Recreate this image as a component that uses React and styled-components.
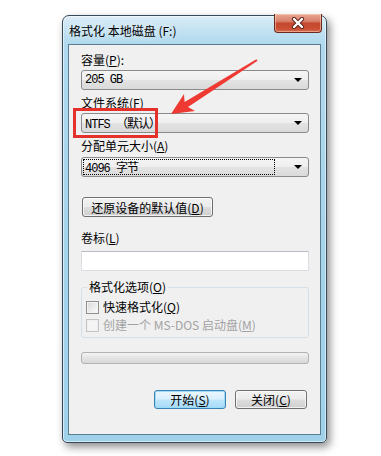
import styled, { createGlobalStyle } from 'styled-components';

const GlobalStyle = createGlobalStyle`
  body {
    margin: 0;
    background: #fff;
    font-family: "Noto Sans CJK SC", "Liberation Sans", sans-serif;
  }
`;

const Page = styled.div`
  position: relative;
  width: 381px;
  height: 456px;
  box-sizing: border-box;
  padding: 15px 0 0 62px;
  overflow: hidden;
  background: #fff;
`;

const Window = styled.div`
  width: 265px;
  height: 428px;
  box-sizing: border-box;
  display: flex;
  flex-direction: column;
  padding: 0 5px 7px 5px;
  border: 1px solid #36495a;
  border-radius: 7px 7px 5px 5px;
  background: linear-gradient(to bottom, #dcedf7 0px, #c3e2f2 14px, #b0d9ee 28px, #a4d3ea 60%, #9fd2ea 100%);
  box-shadow: inset 0 0 0 1px rgba(255, 255, 255, 0.55), 3px 4px 9px rgba(0, 0, 0, 0.45);
`;

const TitleBar = styled.div`
  height: 28px;
  display: flex;
  align-items: center;
  padding-left: 1px;
`;

const Title = styled.div`
  flex: 1;
  font-size: 12px;
  line-height: 16px;
  color: #000;
  padding-top: 1px;
  text-shadow: 0 0 6px rgba(255, 255, 255, 0.9);
`;

const CloseButton = styled.div`
  align-self: flex-start;
  margin: -2px -1px 0 0;
  width: 48px;
  height: 19px;
  box-sizing: border-box;
  display: flex;
  align-items: center;
  justify-content: center;
  border: 1px solid #6b2a1e;
  border-top: none;
  border-radius: 0 0 4px 4px;
  background: linear-gradient(to bottom, #e9a996 0%, #d9806b 40%, #c5472f 52%, #c94f34 80%, #d66a4c 100%);
  box-shadow: inset 0 0 0 1px rgba(255, 220, 200, 0.5);
`;

const Client = styled.div`
  flex: 1;
  display: flex;
  flex-direction: column;
  padding: 0 11px 0 12px;
  border: 1px solid #5c7c90;
  background: #f0f0f0;
  font-size: 12px;
  color: #000;
`;

const Label = styled.div`
  margin-top: ${p => p.$top || 5}px;
  line-height: 16px;
  height: 16px;
  white-space: nowrap;
`;

const Key = styled.span`
  text-decoration: underline;
`;

const Combo = styled.div`
  margin-top: ${p => p.$top || 2}px;
  height: 20px;
  box-sizing: border-box;
  display: flex;
  align-items: center;
  padding: 1px 0 1px 1px;
  border: 1px solid #8a8a8a;
  border-radius: 3px;
  background: linear-gradient(to bottom, #f5f5f5 0%, #efefef 48%, #e3e3e3 52%, #dadada 100%);
`;

const ComboValue = styled.div`
  flex: 1;
  height: 16px;
  box-sizing: border-box;
  margin-right: 19px;
  padding-left: 1px;
  display: flex;
  align-items: center;
  border: 1px dotted ${p => (p.$focus ? '#000' : 'transparent')};
  font-family: "Liberation Mono", "Noto Sans CJK SC", monospace;
  font-size: 12px;
  letter-spacing: -1px;
  white-space: nowrap;
`;

const ComboArrow = styled.div`
  width: 0;
  height: 0;
  margin-right: 6px;
  border-left: 4px solid transparent;
  border-right: 4px solid transparent;
  border-top: 4px solid #000;
`;

const Button = styled.div`
  margin-top: ${p => p.$top || 0}px;
  margin-left: ${p => p.$left || 0}px;
  width: ${p => p.$width}px;
  height: ${p => p.$height || 20}px;
  box-sizing: border-box;
  display: flex;
  align-items: center;
  justify-content: center;
  font-size: 12px;
  white-space: nowrap;
  border: 1px solid ${p => (p.$default ? '#3c7fb1' : '#707070')};
  border-radius: 3px;
  background: ${p =>
    p.$default
      ? 'linear-gradient(to bottom, #eaf6fd 0%, #d9f0fc 48%, #bee6fd 52%, #a7d9f5 100%)'
      : 'linear-gradient(to bottom, #f2f2f2 0%, #ebebeb 48%, #dddddd 52%, #cfcfcf 100%)'};
  box-shadow: inset 0 0 0 1px ${p => (p.$default ? 'rgba(150, 220, 250, 0.9)' : 'rgba(255, 255, 255, 0.7)')};
`;

const TextBox = styled.div`
  margin-top: 5px;
  height: 20px;
  box-sizing: border-box;
  border: 1px solid #dadde2;
  border-top-color: #b7bcc4;
  background: #fff;
`;

const Group = styled.fieldset`
  margin: 8px 0 0 0;
  padding: 0 0 4px 5px;
  border: 1px solid #d5dfe5;
  border-radius: 3px;
  min-width: 0;
`;

const Legend = styled.legend`
  padding: 0 2px;
  line-height: 16px;
  font-size: 12px;
`;

const CheckRow = styled.div`
  margin-top: ${p => p.$top}px;
  margin-left: -1px;
  height: 16px;
  display: flex;
  align-items: center;
  gap: 4px;
  line-height: 16px;
  white-space: nowrap;
  color: ${p => (p.$disabled ? '#a3a3a3' : '#000')};
`;

const CheckBox = styled.div`
  width: 13px;
  height: 13px;
  box-sizing: border-box;
  border: 1px solid ${p => (p.$disabled ? '#c4c4c4' : '#8e8f8f')};
  background: ${p =>
    p.$disabled ? '#f4f4f4' : 'linear-gradient(135deg, #d6d6d6 0%, #eeeeee 60%, #fbfbfb 100%)'};
  box-shadow: inset 0 0 0 1px ${p => (p.$disabled ? '#f0f0f0' : '#f4f4f4')};
`;

const Progress = styled.div`
  margin-top: 14px;
  height: 12px;
  box-sizing: border-box;
  border: 1px solid #b2b2b2;
  border-radius: 3px;
  background: linear-gradient(to bottom, #f3f3f3 0%, #e4e4e4 50%, #d8d8d8 100%);
`;

const ButtonRow = styled.div`
  margin-top: 26px;
  margin-right: 2px;
  display: flex;
  justify-content: flex-end;
  gap: 9px;
`;

const Annotation = styled.svg`
  position: absolute;
  left: 0;
  top: 0;
  pointer-events: none;
`;

function Close() {
  return (
    <CloseButton>
      <svg width="14" height="12" viewBox="0 0 14 12">
        <path d="M3 2 L11 10 M11 2 L3 10" stroke="#5a2217" strokeWidth="4.2" strokeLinecap="round" />
        <path d="M3 2 L11 10 M11 2 L3 10" stroke="#fff" strokeWidth="2.4" strokeLinecap="round" />
      </svg>
    </CloseButton>
  );
}

export default function App() {
  return (
    <Page>
      <GlobalStyle />
      <Window>
        <TitleBar>
          <Title>格式化 本地磁盘 (F:)</Title>
          <Close />
        </TitleBar>
        <Client>
          <Label $top={7}>容量(<Key>P</Key>):</Label>
          <Combo>
            <ComboValue>205 GB</ComboValue>
            <ComboArrow />
          </Combo>

          <Label>文件系统(<Key>F</Key>)</Label>
          <Combo>
            <ComboValue>NTFS （默认）</ComboValue>
            <ComboArrow />
          </Combo>

          <Label>分配单元大小(<Key>A</Key>)</Label>
          <Combo $top={3}>
            <ComboValue $focus>4096 字节</ComboValue>
            <ComboArrow />
          </Combo>

          <Button $top={20} $left={1} $width={131}>
            还原设备的默认值(<Key>D</Key>)
          </Button>

          <Label $top={13}>卷标(<Key>L</Key>)</Label>
          <TextBox />

          <Group>
            <Legend>格式化选项(<Key>O</Key>)</Legend>
            <CheckRow $top={4}>
              <CheckBox />
              <span>快速格式化(<Key>Q</Key>)</span>
            </CheckRow>
            <CheckRow $top={2} $disabled>
              <CheckBox $disabled />
              <span>创建一个 MS-DOS 启动盘(<Key>M</Key>)</span>
            </CheckRow>
          </Group>

          <Progress />

          <ButtonRow>
            <Button $default $width={72} $height={19}>
              开始(<Key>S</Key>)
            </Button>
            <Button $width={72} $height={19}>
              关闭(<Key>C</Key>)
            </Button>
          </ButtonRow>
        </Client>
      </Window>

      <Annotation width="381" height="456" viewBox="0 0 381 456">
        <rect x="74.5" y="109.5" width="82" height="27" fill="none" stroke="#e4312b" strokeWidth="3" />
        <polygon
          points="171,114 195,111 188,107 257.6,60.8 256.4,59.2 184.6,102 184,94"
          fill="#ee3a32"
        />
      </Annotation>
    </Page>
  );
}
